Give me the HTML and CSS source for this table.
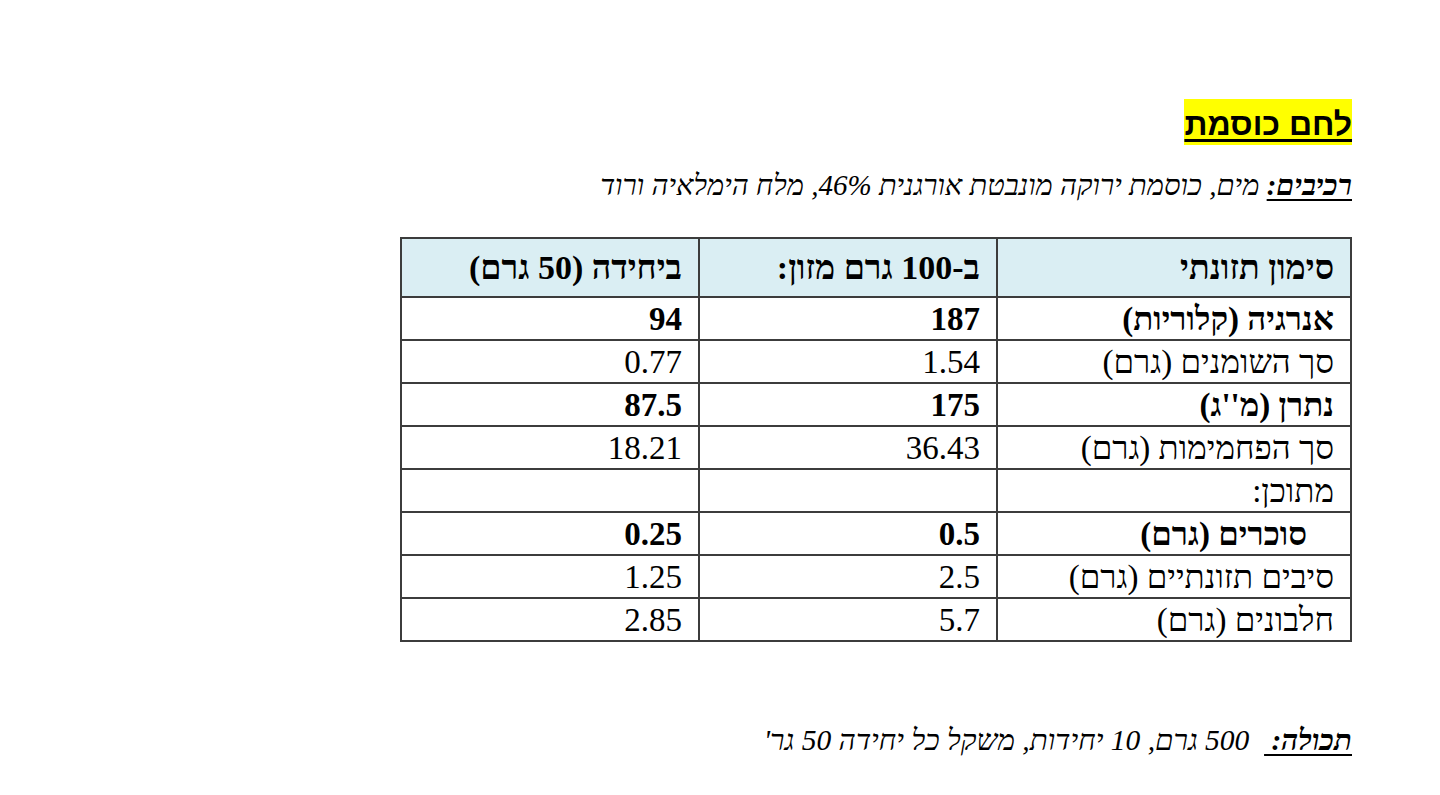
FILE: index.html
```html
<!DOCTYPE html>
<html lang="he" dir="rtl">
<head>
<meta charset="utf-8">
<title>לחם כוסמת</title>
<link rel="stylesheet" href="styles.css">
</head>
<body>
<main class="page">
  <h1 class="title"><span class="mark">לחם כוסמת</span></h1>
  <p class="line ingredients"><span class="label">רכיבים:</span> מים, כוסמת ירוקה מונבטת אורגנית 46%, מלח הימלאיה ורוד</p>
  <table class="nutri">
    <colgroup>
      <col class="c1"><col class="c2"><col class="c3">
    </colgroup>
    <thead>
      <tr>
        <th>סימון תזונתי</th>
        <th>ב-100 גרם מזון:</th>
        <th>ביחידה (50 גרם)</th>
      </tr>
    </thead>
    <tbody>
      <tr class="b"><td>אנרגיה (קלוריות)</td><td>187</td><td>94</td></tr>
      <tr><td>סך השומנים (גרם)</td><td>1.54</td><td>0.77</td></tr>
      <tr class="b"><td>נתרן (מ''ג)</td><td>175</td><td>87.5</td></tr>
      <tr><td>סך הפחמימות (גרם)</td><td>36.43</td><td>18.21</td></tr>
      <tr><td>מתוכן:</td><td></td><td></td></tr>
      <tr class="b"><td class="indent">סוכרים (גרם)</td><td>0.5</td><td>0.25</td></tr>
      <tr><td>סיבים תזונתיים (גרם)</td><td>2.5</td><td>1.25</td></tr>
      <tr><td>חלבונים (גרם)</td><td>5.7</td><td>2.85</td></tr>
    </tbody>
  </table>
  <p class="line content"><span class="label">תכולה:&nbsp;</span>&nbsp; 500 גרם, 10 יחידות, משקל כל יחידה 50 גר'</p>
</main>
</body>
</html>
```

FILE: styles.css
```css
html, body {
  margin: 0;
  padding: 0;
  background: #ffffff;
}

body {
  font-family: "Liberation Serif", "Times New Roman", serif;
  color: #000;
}

.page {
  direction: rtl;
  width: 951px;
  margin-right: 88px;
  margin-left: auto;
  padding-top: 99px;
  display: flex;
  flex-direction: column;
  align-items: stretch;
}

.title {
  margin: 0;
  font-family: "Liberation Sans", Arial, sans-serif;
  font-weight: bold;
  font-size: 32px;
  line-height: 46px;
  height: 46px;
}

.mark {
  display: inline-block;
  height: 46px;
  line-height: 50px;
  background: #ffff00;
  text-decoration: underline;
  text-decoration-thickness: 3px;
  text-underline-offset: 4px;
}

.line {
  margin: 0;
  font-style: italic;
  font-size: 29px;
  line-height: 32px;
}

.line .label {
  font-weight: bold;
  text-decoration: underline;
  text-decoration-thickness: 2px;
  text-underline-offset: 4px;
}

.ingredients {
  margin-top: 24px;
}

.nutri {
  margin-top: 36px;
  width: 950px;
  border-collapse: collapse;
  table-layout: fixed;
}

.nutri col.c1 { width: 354px; }
.nutri col.c2 { width: 298px; }
.nutri col.c3 { width: 298px; }

.nutri th,
.nutri td {
  border: 2px solid #3c3c3c;
  text-align: right;
  padding: 0 16px;
  vertical-align: middle;
  white-space: nowrap;
}

.nutri th {
  background: #daeef3;
  height: 57px;
  font-size: 34px;
  line-height: 38px;
  font-weight: bold;
}

.nutri td {
  height: 41px;
  font-size: 33px;
  line-height: 36px;
  font-weight: normal;
}

.nutri tr.b td {
  font-weight: bold;
}

.nutri td.indent {
  padding-right: 43px;
}

.content {
  margin-top: 82px;
  font-size: 29.5px;
}
```
